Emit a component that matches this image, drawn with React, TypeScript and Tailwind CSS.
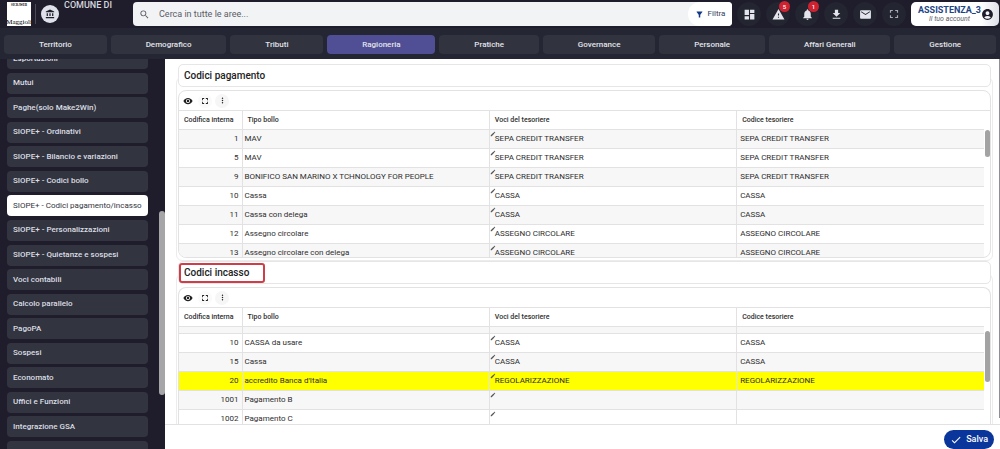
import type { ReactNode } from 'react';
import {
    MdAccountBalance,
    MdAccountCircle,
    MdCheck,
    MdDashboard,
    MdEdit,
    MdFileDownload,
    MdFilterAlt,
    MdFullscreen,
    MdMail,
    MdMoreVert,
    MdNotifications,
    MdSearch,
    MdVisibility,
    MdWarning,
} from 'react-icons/md';

interface Row {
    code: string;
    type: string;
    entry: string;
    treasurer: string;
    highlighted?: boolean;
}

const tabs = [
    'Territorio',
    'Demografico',
    'Tributi',
    'Ragioneria',
    'Pratiche',
    'Governance',
    'Personale',
    'Affari Generali',
    'Gestione',
];

const menu = [
    'Esportazioni',
    'Mutui',
    'Paghe(solo Make2Win)',
    'SIOPE+ - Ordinativi',
    'SIOPE+ - Bilancio e variazioni',
    'SIOPE+ - Codici bollo',
    'SIOPE+ - Codici pagamento/incasso',
    'SIOPE+ - Personalizzazioni',
    'SIOPE+ - Quietanze e sospesi',
    'Voci contabili',
    'Calcolo parallelo',
    'PagoPA',
    'Sospesi',
    'Economato',
    'Uffici e Funzioni',
    'Integrazione GSA',
    'Impostazioni verifiche',
];

const payments: Row[] = [
    { code: '1', type: 'MAV', entry: 'SEPA CREDIT TRANSFER', treasurer: 'SEPA CREDIT TRANSFER' },
    { code: '5', type: 'MAV', entry: 'SEPA CREDIT TRANSFER', treasurer: 'SEPA CREDIT TRANSFER' },
    { code: '9', type: 'BONIFICO SAN MARINO X TCHNOLOGY FOR PEOPLE', entry: 'SEPA CREDIT TRANSFER', treasurer: 'SEPA CREDIT TRANSFER' },
    { code: '10', type: 'Cassa', entry: 'CASSA', treasurer: 'CASSA' },
    { code: '11', type: 'Cassa con delega', entry: 'CASSA', treasurer: 'CASSA' },
    { code: '12', type: 'Assegno circolare', entry: 'ASSEGNO CIRCOLARE', treasurer: 'ASSEGNO CIRCOLARE' },
    { code: '13', type: 'Assegno circolare con delega', entry: 'ASSEGNO CIRCOLARE', treasurer: 'ASSEGNO CIRCOLARE' },
];

const receipts: Row[] = [
    { code: '10', type: 'CASSA da usare', entry: 'CASSA', treasurer: 'CASSA' },
    { code: '15', type: 'Cassa', entry: 'CASSA', treasurer: 'CASSA' },
    { code: '20', type: "accredito Banca d'Italia", entry: 'REGOLARIZZAZIONE', treasurer: 'REGOLARIZZAZIONE', highlighted: true },
    { code: '1001', type: 'Pagamento B', entry: '', treasurer: '' },
    { code: '1002', type: 'Pagamento C', entry: '', treasurer: '' },
];

function HeaderButton({ label, badge, children }: { label: string; badge?: string; children: ReactNode }) {
    return (
        <button aria-label={label} className="relative flex size-6 items-center justify-center rounded-full bg-[#232530] text-[#e4e5ec]">
            {children}
            {badge && (
                <span className="absolute -top-px right-0 flex size-[11px] items-center justify-center rounded-full bg-[#cf2231] text-[6px] font-medium text-white">
                    {badge}
                </span>
            )}
        </button>
    );
}

function Header() {
    return (
        <header className="flex h-7 shrink-0 items-center bg-[#1f1c2b] pr-px pl-[7px]">
            <div className="flex size-6 shrink-0 flex-col items-center justify-between overflow-hidden bg-white font-['Liberation_Serif',serif] text-black">
                <span className="text-[3px] leading-[6px] font-bold">SICRAWEB</span>
                <span className="text-[7px] leading-[8px]">Maggioli</span>
            </div>
            <div className="ml-1 h-5 w-px bg-[#4a4957]" />
            <div className="ml-[5px] flex size-[18px] shrink-0 items-center justify-center rounded-full bg-[#dfe1ea] text-[#1f1c2b]">
                <MdAccountBalance className="size-[10px]" />
            </div>
            <div className="ml-[5px] w-[69px] shrink-0 self-start text-[9px] leading-[11px] font-medium whitespace-nowrap text-[#d6d7df]">
                COMUNE DI
            </div>

            <div className="flex h-6 flex-1 items-center overflow-hidden rounded-[4px] bg-[#f1f3f5]">
                <MdSearch className="ml-[6px] size-[11px] text-[#5c5d66]" />
                <input
                    type="text"
                    aria-label="Cerca in tutte le aree"
                    placeholder="Cerca in tutte le aree..."
                    className="ml-[9px] h-full min-w-0 flex-1 bg-transparent text-[9px] text-gray-700 outline-none placeholder:text-[#5c5d66]"
                />
                <button className="flex h-full w-11 items-center justify-center gap-[4px] rounded-l-full bg-white text-[8px] text-[#33405c]">
                    <MdFilterAlt className="size-[9px] text-[#123a86]" />
                    Filtra
                </button>
            </div>

            <div className="ml-[5px] flex gap-[5px]">
                <HeaderButton label="Cruscotto">
                    <MdDashboard className="size-[13px]" />
                </HeaderButton>
                <HeaderButton label="Avvisi" badge="5">
                    <MdWarning className="size-[13px]" />
                </HeaderButton>
                <HeaderButton label="Notifiche" badge="1">
                    <MdNotifications className="size-[13px]" />
                </HeaderButton>
                <HeaderButton label="Scarica">
                    <MdFileDownload className="size-[13px]" />
                </HeaderButton>
                <HeaderButton label="Posta">
                    <MdMail className="size-[13px]" />
                </HeaderButton>
                <HeaderButton label="Schermo intero">
                    <MdFullscreen className="size-[14px] text-[#a9aab4]" />
                </HeaderButton>
            </div>

            <button className="ml-[5px] flex h-6 w-[88px] items-center justify-between rounded-[5px] bg-gradient-to-r from-white from-80% to-[#dfe1ea] pr-[6px] pl-[7px]">
                <span className="text-center">
                    <span className="block text-[9px] leading-[9px] font-bold text-[#1d4587]">ASSISTENZA_3</span>
                    <span className="block text-[7px] leading-[8px] text-[#5c5d66] italic">Il tuo account</span>
                </span>
                <MdAccountCircle className="size-[13px] shrink-0 text-[#1f1c2b]" />
            </button>
        </header>
    );
}

function Tabs() {
    return (
        <nav className="flex h-[31px] shrink-0 items-center gap-1 bg-[#252634] px-1 pt-[2px]">
            {tabs.map((tab) => (
                <button
                    key={tab}
                    className={`h-[19px] flex-auto rounded-[4px] text-[8px] font-medium text-[#e2e3ea] ${tab === 'Ragioneria' ? 'bg-[#504f96]' : 'bg-[#31343f]'}`}
                >
                    {tab}
                </button>
            ))}
        </nav>
    );
}

function Sidebar() {
    return (
        <aside className="relative flex w-[165px] shrink-0 flex-col overflow-hidden bg-[#1f1c2b] pr-[17px] pl-[7px]">
            <ul className="-mt-[11px] -mb-[13px] flex flex-1 flex-col justify-between">
                {menu.map((item) => (
                    <li key={item}>
                        <a
                            href="#"
                            className={`flex h-[21px] items-center rounded-[4px] px-[6px] text-[8px] whitespace-nowrap ${
                                item === 'SIOPE+ - Codici pagamento/incasso' ? 'bg-white text-[#33343c]' : 'bg-[#32353f] font-medium text-[#dcdde4]'
                            }`}
                        >
                            {item}
                        </a>
                    </li>
                ))}
            </ul>
            <div className="absolute top-[39%] right-0 h-[184px] w-[6px] rounded-[3px] bg-[#a6a6a8]" />
        </aside>
    );
}

function GridToolbar() {
    return (
        <div className="flex h-5 items-center gap-[3px] border-b border-[#e2e2e2] pl-[2px] text-[#222]">
            <button aria-label="Mostra colonne" className="flex size-[14px] items-center justify-center rounded-full">
                <MdVisibility className="size-[10px]" />
            </button>
            <button aria-label="Espandi" className="flex size-[14px] items-center justify-center rounded-full bg-[#fafafa]">
                <MdFullscreen className="size-[10px]" />
            </button>
            <button aria-label="Altro" className="flex size-[14px] items-center justify-center rounded-full bg-[#f6f6f6]">
                <MdMoreVert className="size-[9px]" />
            </button>
        </div>
    );
}

function CodeTable({ label, rows, scrolled }: { label: string; rows: Row[]; scrolled?: boolean }) {
    return (
        <table aria-label={label} className="w-full table-fixed border-collapse text-[8px] leading-[10px] text-[#2e2e2e]">
            <thead>
                <tr className="h-[18px] border-b border-[#e2e2e2] text-left text-[7px]">
                    <th className="w-[63px] border-r border-[#e2e2e2] p-0 pl-[5px] font-medium whitespace-nowrap">Codifica interna</th>
                    <th className="border-r border-[#e2e2e2] p-0 pl-[5px] font-medium">Tipo bollo</th>
                    <th className="border-r border-[#e2e2e2] p-0 pl-[5px] font-medium">Voci del tesoriere</th>
                    <th className="p-0 pl-[5px] font-medium">Codice tesoriere</th>
                </tr>
            </thead>
            <tbody>
                {scrolled && (
                    <tr className="h-[7px] border-b border-[#e2e2e2] bg-[#f7f7f7]">
                        <td className="border-r border-[#e2e2e2] p-0" />
                        <td className="border-r border-[#e2e2e2] p-0" />
                        <td className="border-r border-[#e2e2e2] p-0" />
                        <td className="p-0" />
                    </tr>
                )}
                {rows.map((row, i) => (
                    <tr
                        key={row.code}
                        className={`h-[19px] border-b border-[#e2e2e2] ${
                            row.highlighted ? 'bg-[#ffff00]' : (i % 2 === 0) !== Boolean(scrolled) ? 'bg-[#f7f7f7]' : 'bg-white'
                        }`}
                    >
                        <td className="border-r border-[#e2e2e2] p-0 pr-[3px] text-right">{row.code}</td>
                        <td className="border-r border-[#e2e2e2] p-0 pl-[2px] whitespace-nowrap">{row.type}</td>
                        <td className="relative border-r border-[#e2e2e2] p-0 pl-[5px]">
                            <MdEdit className="absolute top-px left-0 size-[6px] text-[#555]" />
                            {row.entry}
                        </td>
                        <td className="p-0 pl-[3px]">{row.treasurer}</td>
                    </tr>
                ))}
            </tbody>
        </table>
    );
}

function SectionTitle({ children, marked }: { children: ReactNode; marked?: boolean }) {
    return (
        <div className="relative mx-[2px] flex h-[23px] shrink-0 items-center rounded-[5px] border border-[#e6e6e6] bg-white">
            <h2
                className={`text-[10px] leading-[12px] font-medium text-[#222] ${
                    marked ? 'flex h-5 w-[86px] items-center rounded-[3px] border-2 border-[#cf3e48] pl-[3px]' : 'pl-[5px]'
                }`}
            >
                {children}
            </h2>
        </div>
    );
}

export default function App() {
    return (
        <div className="flex h-screen flex-col overflow-hidden bg-white font-[Roboto,sans-serif]">
            <Header />
            <Tabs />
            <div className="flex min-h-0 flex-1">
                <Sidebar />
                <main className="relative flex min-w-0 flex-1 flex-col">
                    <div className="flex min-h-0 flex-1 flex-col overflow-hidden border-b border-[#e2e2e2] pt-[5px] pr-[7px] pl-[11px]">
                        <section className="shrink-0">
                            <SectionTitle>Codici pagamento</SectionTitle>
                            <div className="-mt-[10px] rounded-[6px] border border-[#ececec] px-px pt-[12px] pb-[2px]">
                                <div className="relative h-[168px] overflow-hidden rounded-[8px] border border-[#e2e2e2] bg-white">
                                    <GridToolbar />
                                    <div className="pr-[6px]">
                                        <CodeTable label="Codici pagamento" rows={payments} />
                                    </div>
                                    <div className="absolute top-[39px] right-0 h-[27px] w-[5px] rounded-[3px] bg-[#a3a3a3]" />
                                </div>
                            </div>
                        </section>
                        <section className="flex min-h-0 flex-1 flex-col">
                            <SectionTitle marked>Codici incasso</SectionTitle>
                            <div className="-mt-[10px] min-h-0 flex-1 rounded-t-[6px] border border-b-0 border-[#ececec] px-px pt-[12px]">
                                <div className="relative h-full overflow-hidden rounded-t-[8px] border border-b-0 border-[#e2e2e2] bg-white">
                                    <GridToolbar />
                                    <div className="pr-[6px]">
                                        <CodeTable label="Codici incasso" rows={receipts} scrolled />
                                    </div>
                                    <div className="absolute top-[43px] right-0 h-[51px] w-[5px] rounded-[3px] bg-[#a3a3a3]" />
                                </div>
                            </div>
                        </section>
                    </div>
                    <footer className="flex h-6 shrink-0 justify-end pt-[5px] pr-[6px]">
                        <button className="flex h-[19px] items-center gap-[4px] rounded-full bg-[#0a359a] px-[6px] text-[9px] font-medium text-white">
                            <MdCheck className="size-[12px]" />
                            Salva
                        </button>
                    </footer>
                    <div className="absolute top-0 right-0 h-[92%] w-px bg-[#8f9096]" />
                </main>
            </div>
        </div>
    );
}
